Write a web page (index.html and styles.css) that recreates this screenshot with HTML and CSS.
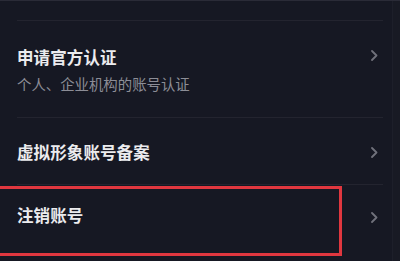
FILE: index.html
```html
<!DOCTYPE html>
<html lang="zh-CN">
<head>
<meta charset="utf-8">
<link rel="stylesheet" href="styles.css">
</head>
<body>
<div class="screen">
  <div class="top-gap"></div>
  <div class="item item-first">
    <div class="head">
      <span class="title">申请官方认证</span>
      <svg class="chev" width="7" height="11" viewBox="0 0 7 11"><path d="M1 1 L5.5 5.5 L1 10" fill="none" stroke="#70717b" stroke-width="1.8" stroke-linecap="round" stroke-linejoin="round"/></svg>
    </div>
    <div class="sub">个人、企业机构的账号认证</div>
  </div>
  <div class="item item-second">
    <div class="head">
      <span class="title">虚拟形象账号备案</span>
      <svg class="chev" width="7" height="11" viewBox="0 0 7 11"><path d="M1 1 L5.5 5.5 L1 10" fill="none" stroke="#70717b" stroke-width="1.8" stroke-linecap="round" stroke-linejoin="round"/></svg>
    </div>
  </div>
  <div class="item item-third">
    <div class="mark"></div>
    <div class="head">
      <span class="title">注销账号</span>
      <svg class="chev chev-low" width="7" height="11" viewBox="0 0 7 11"><path d="M1 1 L5.5 5.5 L1 10" fill="none" stroke="#70717b" stroke-width="1.8" stroke-linecap="round" stroke-linejoin="round"/></svg>
    </div>
  </div>
</div>
</body>
</html>
```

FILE: styles.css
```css
html, body {
  margin: 0;
  padding: 0;
  background: #161823;
}
body {
  width: 400px;
  height: 261px;
  overflow: hidden;
  font-family: "Noto Sans CJK SC", "Noto Sans", sans-serif;
}
.screen {
  position: relative;
  height: 261px;
  border-top: 1px solid #2a2b37;
  box-sizing: border-box;
  box-shadow: inset -7px 0 0 #181a24, inset -8px 0 0 #1d1f2a;
}
.top-gap {
  height: 19px;
}
.item {
  position: relative;
  margin: 0 17px;
  border-top: 1px solid #23242f;
}
.item-first {
  padding: 25px 0 23px;
}
.item-second {
  padding: 23px 0 21px;
}
.item-third {
  padding: 19px 0 20px;
}
.head {
  display: flex;
  justify-content: space-between;
  align-items: center;
}
.title {
  font-size: 16.5px;
  line-height: 22px;
  font-weight: 700;
  color: #ebebee;
  letter-spacing: 0.1px;
}
.sub {
  margin-top: 6px;
  font-size: 14.4px;
  line-height: 20px;
  color: #8c8d96;
}
.chev {
  display: block;
  margin-right: 5px;
}
.item-first .chev {
  margin-top: -4px;
}
.chev-low {
  margin-top: 5px;
}
.mark {
  position: absolute;
  left: -22px;
  top: 1px;
  width: 347px;
  height: 70px;
  border: 3.5px solid #e0373f;
  box-sizing: border-box;
}
```
